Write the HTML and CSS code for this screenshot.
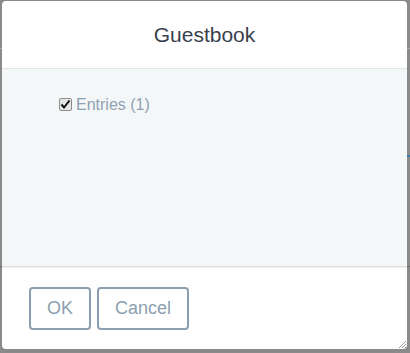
FILE: index.html
```html
<!DOCTYPE html>
<html>
<head>
<meta charset="utf-8">
<link rel="stylesheet" href="styles.css">
</head>
<body>
<div class="backdrop">
  <div class="bd-line bd-line-a"></div>
  <div class="bd-line bd-line-b"></div>
  <div class="bd-line bd-line-c"></div>
</div>
<div class="dialog">
  <div class="dialog-header">
    <h1 class="dialog-title">Guestbook</h1>
  </div>
  <div class="dialog-body">
    <label class="check-row">
      <input type="checkbox" class="check" checked>
      <span class="check-label">Entries (1)</span>
    </label>
  </div>
  <div class="dialog-footer">
    <button class="btn btn-ok">OK</button>
    <button class="btn btn-cancel">Cancel</button>
    <svg class="grip" width="10" height="10" viewBox="0 0 10 10">
      <line x1="9" y1="2" x2="2" y2="9" stroke="#9a9a9a" stroke-width="1"/>
      <line x1="9" y1="5" x2="5" y2="9" stroke="#9a9a9a" stroke-width="1"/>
      <line x1="9" y1="8" x2="8" y2="9" stroke="#9a9a9a" stroke-width="1"/>
    </svg>
  </div>
</div>
</body>
</html>
```
FILE: styles.css
```css
html, body {
  margin: 0;
  padding: 0;
}
body {
  width: 410px;
  height: 353px;
  background: #8a8a8a;
  font-family: "Liberation Sans", Arial, sans-serif;
  position: relative;
  overflow: hidden;
}
.backdrop {
  position: absolute;
  inset: 0;
}
.bd-line {
  position: absolute;
  height: 1px;
}
.bd-line-a {
  left: 0;
  top: 48px;
  width: 410px;
  background: #a9a9a9;
}
.bd-line-b {
  left: 0;
  top: 266px;
  width: 410px;
  background: #6e6e6e;
}
.bd-line-c {
  right: 0;
  top: 155px;
  width: 6px;
  height: 2px;
  background: #3a7ba8;
}
.dialog {
  position: relative;
  margin: 1px 0 0 2px;
  width: 405px;
  height: 348px;
  background: #fff;
  border-radius: 4px;
  display: flex;
  flex-direction: column;
  overflow: hidden;
}
.dialog-header {
  height: 67px;
  border-bottom: 1px solid #e2e6e9;
  display: flex;
  align-items: center;
  justify-content: center;
  flex: none;
}
.dialog-title {
  margin: 0;
  font-size: 21px;
  font-weight: normal;
  color: #38424c;
}
.dialog-body {
  flex: 1;
  background: #f4f7f8;
  padding: 27px 0 0 56px;
  border-bottom: 1px solid #dde1e3;
  box-shadow: 0 1px 1px rgba(0,0,0,0.06);
}
.check-row {
  display: flex;
  align-items: center;
  gap: 4px;
}
.check {
  appearance: none;
  -webkit-appearance: none;
  box-sizing: border-box;
  margin: 0 0 2px 1px;
  width: 13px;
  height: 13px;
  border: 1px solid #8f8f8f;
  border-radius: 2px;
  background-color: #e6e6e6;
  background-image: url("data:image/svg+xml;utf8,<svg xmlns='http://www.w3.org/2000/svg' width='11' height='11' viewBox='0 0 11 11'><path d='M1.5 5.5 L4 8.5 L9.5 1.5' fill='none' stroke='%23111' stroke-width='2'/></svg>");
  background-repeat: no-repeat;
  background-position: center;
}
.check-label {
  font-size: 16px;
  color: #8ea1b2;
}
.dialog-footer {
  height: 82px;
  flex: none;
  position: relative;
  display: flex;
  align-items: flex-start;
  gap: 6px;
  padding: 20px 0 0 27px;
  box-sizing: border-box;
}
.btn {
  height: 43px;
  border: 2px solid #8c9fb0;
  border-radius: 4px;
  background: #fff;
  color: #8c9fb0;
  font-family: "Liberation Sans", Arial, sans-serif;
  font-size: 18px;
  padding: 0;
}
.btn-ok {
  width: 62px;
}
.btn-cancel {
  width: 92px;
}
.grip {
  position: absolute;
  right: 0;
  bottom: 0;
}
```
